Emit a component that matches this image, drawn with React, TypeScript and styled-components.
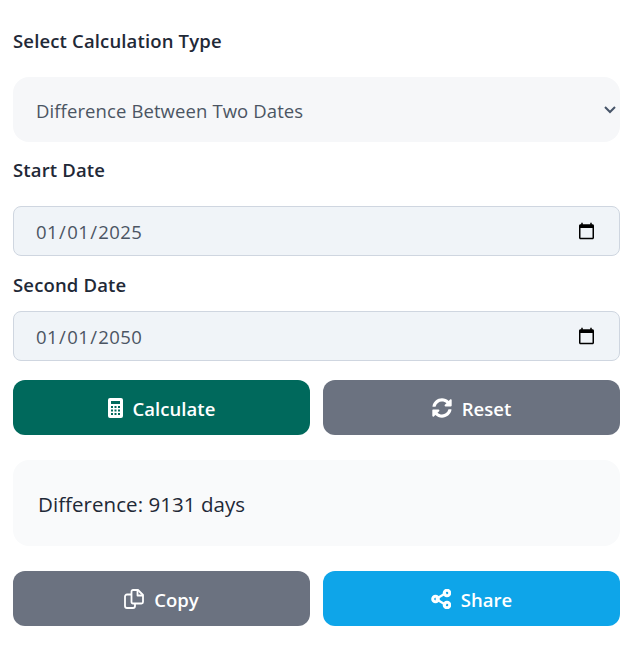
import styled, { createGlobalStyle } from "styled-components";
import { FaSyncAlt } from "react-icons/fa";

const GlobalStyle = createGlobalStyle`
    html, body {
        margin: 0;
        padding: 0;
        background: #ffffff;
    }
    * {
        box-sizing: border-box;
    }
`;

const Page = styled.div`
    width: 640px;
    height: 656px;
    padding: 0 20px 0 13px;
    font-family: "Open Sans", "Noto Sans", sans-serif;
    color: #1f2937;
`;

const Label = styled.label<{ $height: number; $top: number }>`
    display: block;
    height: ${(p) => p.$height}px;
    padding-top: ${(p) => p.$top}px;
    font-size: 18.5px;
    line-height: 24px;
    font-weight: 600;
    letter-spacing: 0.15px;
`;

const SelectWrap = styled.div`
    position: relative;
    height: 65px;
`;

const TypeSelect = styled.select`
    appearance: none;
    width: 100%;
    height: 100%;
    padding: 1px 23px 0;
    border: none;
    border-radius: 16px;
    background: #f6f7f9;
    color: #4b5563;
    font-family: inherit;
    font-size: 18.5px;
    letter-spacing: 0.1px;
`;

const Chevron = styled.svg`
    position: absolute;
    top: 28px;
    right: 4px;
    width: 12px;
    height: 9px;
    pointer-events: none;
`;

const DateInput = styled.input`
    display: block;
    width: 100%;
    height: 50px;
    padding: 1px 23px 0 21px;
    border: 1px solid #cfd6e0;
    border-radius: 8px;
    background: #f0f4f8;
    color: #4b5563;
    font-family: inherit;
    font-size: 18.5px;
    letter-spacing: 0.4px;

    &::-webkit-calendar-picker-indicator {
        width: 19px;
        height: 19px;
        padding: 0;
        margin: 0;
    }
`;

const ButtonRow = styled.div<{ $top: number }>`
    display: grid;
    grid-template-columns: 1fr 1fr;
    gap: 13px;
    margin-top: ${(p) => p.$top}px;
`;

const ActionButton = styled.button<{ $bg: string }>`
    display: flex;
    align-items: center;
    justify-content: center;
    gap: 10px;
    height: 55px;
    padding: 2px 0 0;
    border: none;
    border-radius: 12px;
    background: ${(p) => p.$bg};
    color: #ffffff;
    font-family: inherit;
    font-size: 18.5px;
    font-weight: 600;
    letter-spacing: 0.05px;

    svg {
        flex: none;
        margin-top: -2px;
    }
`;

const Result = styled.div`
    display: flex;
    align-items: center;
    height: 86px;
    margin-top: 25px;
    padding: 1px 25px 0;
    border-radius: 16px;
    background: #f9fafb;
    font-size: 20.5px;
    letter-spacing: 0.05px;
    color: #1f2937;
`;

function CalculatorIcon() {
    return (
        <svg width="15" height="20" viewBox="0 0 15 20" fill="#ffffff">
            <path
                fillRule="evenodd"
                d="M2 0h11a2 2 0 0 1 2 2v16a2 2 0 0 1-2 2H2a2 2 0 0 1-2-2V2a2 2 0 0 1 2-2zM3 3v3h9V3zM3 8v2h2V8zm3.500 0v2h2V8zM10 8v2h2V8zm-7 3.500v2h2v-2zm3.500 0v2h2v-2zm3.500 0v2h2v-2zM3 15v2h2v-2zm3.500 0v2h2v-2zm3.500 0v2h2v-2z"
            />
        </svg>
    );
}

function CopyIcon() {
    return (
        <svg width="20" height="20" viewBox="0 0 20 20" fill="none" stroke="#ffffff" strokeWidth="1.8" strokeLinejoin="round">
            <path d="M7 5.500H3a2 2 0 0 0-2 2V17a2 2 0 0 0 2 2h6a2 2 0 0 0 2-2v-2.500" />
            <path d="M9 1h5l5 5v7a1.500 1.500 0 0 1-1.500 1.500H9A1.500 1.500 0 0 1 7.500 13V2.500A1.500 1.500 0 0 1 9 1z" />
            <path d="M13.500 1v5.500H19" />
        </svg>
    );
}

function ShareIcon() {
    return (
        <svg width="20" height="20" viewBox="0 0 20 20" fill="none" stroke="#ffffff">
            <path d="M5 10l10-6M5 10l10 6" strokeWidth="2.200" />
            <circle cx="4.500" cy="10" r="2.800" strokeWidth="3" />
            <circle cx="16" cy="4" r="2.800" strokeWidth="3" />
            <circle cx="16" cy="16" r="2.800" strokeWidth="3" />
        </svg>
    );
}

export default function App() {
    return (
        <Page>
            <GlobalStyle />
            <Label $height={77} $top={29} htmlFor="calc-type">Select Calculation Type</Label>
            <SelectWrap>
                <TypeSelect id="calc-type" defaultValue="diff">
                    <option value="diff">Difference Between Two Dates</option>
                </TypeSelect>
                <Chevron viewBox="0 0 12 9" fill="none" stroke="#475569" strokeWidth="2">
                    <path d="M1 2l5 5 5-5" />
                </Chevron>
            </SelectWrap>
            <Label $height={64} $top={16} htmlFor="start-date">Start Date</Label>
            <DateInput id="start-date" type="date" defaultValue="2025-01-01" />
            <Label $height={55} $top={17} htmlFor="second-date">Second Date</Label>
            <DateInput id="second-date" type="date" defaultValue="2050-01-01" />
            <ButtonRow $top={19}>
                <ActionButton $bg="#00695c"><CalculatorIcon />Calculate</ActionButton>
                <ActionButton $bg="#6b7280"><FaSyncAlt size={20} />Reset</ActionButton>
            </ButtonRow>
            <Result>Difference: 9131 days</Result>
            <ButtonRow $top={25}>
                <ActionButton $bg="#6b7280"><CopyIcon />Copy</ActionButton>
                <ActionButton $bg="#0ea5e9"><ShareIcon />Share</ActionButton>
            </ButtonRow>
        </Page>
    );
}
